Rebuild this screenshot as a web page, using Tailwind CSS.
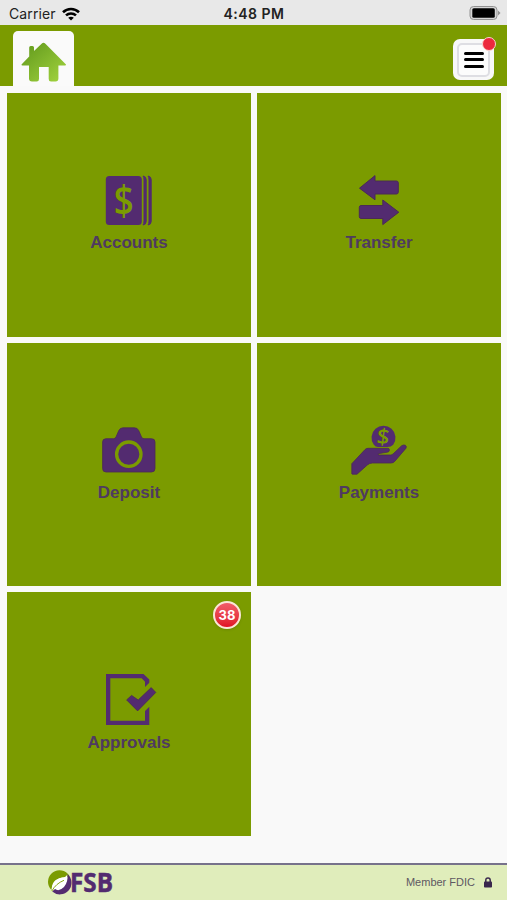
<!DOCTYPE html>
<html lang="en">

<head>
  <meta charset="UTF-8">
  <meta name="viewport" content="width=device-width, initial-scale=1.0">
  <title>FSB Mobile</title>
  <script src="https://cdn.jsdelivr.net/npm/@tailwindcss/browser@4"></script>
</head>

<body class="bg-[#f9f9f9] font-['Liberation_Sans',sans-serif]">
  <div class="w-[507px] h-[900px] flex flex-col overflow-hidden">

    <!-- Status bar -->
    <div class="h-[25px] shrink-0 bg-[#e8e8e8] grid grid-cols-3 items-center pl-[9px] pr-[6px] pt-[2px] font-['Inter',sans-serif] text-[#222]">
      <div class="flex items-center gap-[6px]">
        <span class="text-[14px] leading-none tracking-[0.1px]">Carrier</span>
        <svg class="w-[18px] h-[14px]" viewBox="0 0 18 14" fill="none" stroke="#000" stroke-width="2.6">
          <path d="M1 5.2C5.5 .9 12.5 .9 17 5.2" />
          <path d="M4 8.4C6.8 5.8 11.2 5.8 14 8.4" />
          <path d="M9 13.5L6.2 10.7C7.8 9.3 10.2 9.3 11.8 10.7Z" fill="#000" stroke="none" />
        </svg>
      </div>
      <span class="-ml-[2px] text-center text-[14px] leading-none tracking-[0.5px] font-semibold whitespace-nowrap">4:48 PM</span>
      <svg class="justify-self-end w-[32px] h-[16px] mb-[1px]" viewBox="0 0 32 16">
        <rect x="1" y="1.5" width="27" height="13" rx="3.5" fill="#d5d5d5" stroke="#929292" />
        <rect x="3.3" y="3.2" width="22.5" height="9.6" rx="1.5" fill="#000" />
        <path d="M29 5.5L31.5 8L29 10.5Z" fill="#929292" />
      </svg>
    </div>

    <!-- Header -->
    <header class="h-[61px] shrink-0 bg-[#7b9b00] flex justify-between items-end pl-[13px] pr-[13px]">
      <div class="w-[61px] h-[55px] bg-[#fafafa] rounded-t-[5px]">
        <svg class="w-[61px] h-[55px]" viewBox="0 0 61 55">
          <defs>
            <linearGradient id="house" x1="0" y1="0" x2="1" y2="1">
              <stop offset="0" stop-color="#5f971b" />
              <stop offset="1" stop-color="#a4d53f" />
            </linearGradient>
          </defs>
          <path d="M8.5 33.5L16.2 25.5V16.5Q16.2 15 17.7 15H19.5Q21 15 21 16.5V20L28.6 12.7Q30.5 11 32.4 12.7L53 33.5Q53.2 34.4 52 34.4H45.4V47.5Q45.4 50.5 42.5 50.5H38Q35.7 50.5 35.7 48V36H26V48Q26 50.5 23.7 50.5H19Q16 50.5 16 47.5V34.4H9.5Q8.3 34.4 8.5 33.5Z" fill="url(#house)" />
        </svg>
      </div>
      <button class="relative w-[41px] h-[41px] mb-[6px] bg-[#f8f8f8] rounded-[7px] flex items-center justify-center">
        <span class="w-[33px] h-[34px] rounded-[5px] border-2 border-[#dedee3] bg-[#fcfcfc] flex flex-col items-center justify-center gap-[3.5px]">
          <span class="w-[20px] h-[3px] rounded-full bg-black"></span>
          <span class="w-[20px] h-[3px] rounded-full bg-black"></span>
          <span class="w-[20px] h-[3px] rounded-full bg-black"></span>
        </span>
        <span class="absolute -top-[2px] -right-[2px] w-[14px] h-[14px] rounded-full border border-[#f8d5cf] bg-[#ec293d]"></span>
      </button>
    </header>

    <!-- Menu tiles -->
    <main class="mt-[7px] ml-[7px] grid grid-cols-[244px_244px] grid-rows-[243.5px_243.5px_244px] gap-[6px] text-[#4f3a60]">
      <a class="bg-[#7b9b00] flex flex-col items-center pt-[77px]">
        <svg class="w-[100px] h-[60px]" viewBox="0 0 100 60" fill="#532b70">
          <rect x="26.8" y="6" width="36" height="49" rx="3.5" />
          <path d="M64 6Q67.2 6.5 67.2 9.5V51.5Q67.2 54.5 64 55Q65 54 65 51V10Q65 7 64 6Z" stroke="#532b70" />
          <path d="M69 6Q72.2 6.5 72.2 9.5V51.5Q72.2 54.5 69 55Q70 54 70 51V10Q70 7 69 6Z" stroke="#532b70" />
          <text x="44.8" y="45" text-anchor="middle" font-family="Open Sans" font-weight="600" font-size="41" textLength="20" lengthAdjust="spacingAndGlyphs" fill="#7b9b00">$</text>
        </svg>
        <span class="mt-[3px] text-[17px] leading-[20px] font-bold">Accounts</span>
      </a>
      <a class="bg-[#7b9b00] flex flex-col items-center pt-[77px]">
        <svg class="w-[100px] h-[60px]" viewBox="0 0 100 60" fill="#532b70" stroke="#4b2a56" stroke-width="1" stroke-linejoin="round">
          <path d="M30.5 18.2L46 5.6V11H67.5Q69.3 11 69.3 13V22Q69.3 24 67.5 24H46V29.8Z" />
          <path d="M69.8 42.2L53.8 30V35.5H32Q30.3 35.5 30.3 37.5V46.5Q30.3 48.5 32 48.5H53.8V54.6Z" />
        </svg>
        <span class="mt-[3px] text-[17px] leading-[20px] font-bold">Transfer</span>
      </a>
      <a class="bg-[#7b9b00] flex flex-col items-center pt-[77px]">
        <svg class="w-[100px] h-[60px]" viewBox="0 0 100 60" fill="#532b70">
          <path d="M27 18.7H34.5Q36.3 18.7 37 17L39.8 10.5Q41 7.8 44 7.8H55.5Q58.5 7.8 59.7 10.5L62.5 17Q63.2 18.7 65 18.7H72.5Q76 18.7 76 22V48.5Q76 52 72.5 52H27Q23.6 52 23.6 48.5V22Q23.6 18.7 27 18.7Z" stroke="#4b2a56" stroke-width=".8" />
          <circle cx="49.8" cy="34.2" r="12.2" fill="none" stroke="#7b9b00" stroke-width="3.3" />
        </svg>
        <span class="mt-[3px] text-[17px] leading-[20px] font-bold">Deposit</span>
      </a>
      <a class="bg-[#7b9b00] flex flex-col items-center pt-[77px]">
        <svg class="w-[100px] h-[60px]" viewBox="0 0 100 60" fill="#532b70">
          <path d="M44.8 24.8A12 12 0 1 1 64.2 24.8Q62 27 58.5 27H49Q46.5 27 44.8 24.8Z" />
          <text x="54.3" y="24.6" text-anchor="middle" transform="rotate(7 54 17)" font-family="Open Sans" font-weight="600" font-size="22" fill="#7b9b00">$</text>
          <path d="M22.8 53.8V43.7L36 29.6Q37.2 28.3 39 28.3H58.8Q60.4 28.3 60.4 30Q60.4 31.8 58.8 32.1L49.3 33.7V35H61.5Q63 35 64.1 33.9L72.7 25.7Q74.5 24.6 76.3 25.2Q78 26.4 77 28.2L65.7 41.4Q64.3 43 62 43H43.5Q40.5 43 38.3 45L28 54.2H23.2Z" stroke="#4b2a56" stroke-width=".8" />
        </svg>
        <span class="mt-[3px] text-[17px] leading-[20px] font-bold">Payments</span>
      </a>
      <a class="relative bg-[#7b9b00] flex flex-col items-center pt-[77px]">
        <svg class="w-[100px] h-[60px]" viewBox="0 0 100 60" fill="#532b70">
          <path d="M27 5H64.5L70.3 10.5V13.8L66 18V12.8L62.7 9.3H31.3V51.8H66V42L70.3 37.8V56H27Z" />
          <path d="M47.6 30.9L52.6 26.4L59.2 31L72.2 18.6L76.8 23.4L58.6 41.9Z" stroke="#4b2a56" stroke-width=".8" />
        </svg>
        <span class="mt-[4px] text-[17px] leading-[20px] font-bold">Approvals</span>
        <span class="absolute top-[9px] right-[10px] w-[28px] h-[28px] pt-px rounded-full border-2 border-[#fae6d7] bg-linear-to-b from-[#f15b69] to-[#e00c24] shadow text-white text-[13px] font-bold font-['Inter',sans-serif] flex items-center justify-center">38</span>
      </a>
    </main>

    <!-- Footer -->
    <footer class="mt-auto h-[37px] shrink-0 border-t-2 border-[#77728b] bg-[#e0edbb] flex items-center justify-between pl-[48px] pr-[15px]">
      <svg class="w-[68px] h-[35px]" viewBox="0 -4.5 68 35">
        <path d="M3.5 20.5A11 11 0 0 1 19.5 4Q21.5 5.5 21.8 8Q12 6 6 13Q3.2 17 3.5 20.5Z" fill="#7b9b00" />
        <path d="M4 21Q3 10 14 8.3Q18 7.8 19.3 5Q20.8 17 13 20.3Q8 21.7 6 20Z" fill="#fff" />
        <path d="M19.5 4.5A11 11 0 0 1 4.2 22L7 19.5Q11 22.5 16 17.5Q20.3 12.5 19.5 4.5Z" fill="#532b70" />
        <path d="M3.8 21.5Q8 14 16 10.8" fill="none" stroke="#7b9b00" stroke-width=".9" />
        <text x="22" y="22.6" textLength="43" lengthAdjust="spacingAndGlyphs" font-family="Open Sans" font-weight="700" font-size="26.5" fill="#532b70" stroke="#532b70" stroke-width=".5">FSB</text>
      </svg>
      <div class="flex items-center gap-[9px] text-[#5e5862]">
        <span class="text-[11px]">Member FDIC</span>
        <svg class="w-[8px] h-[11px]" viewBox="0 0 8 11">
          <path d="M1.8 5V3.2Q1.8 1 4 1T6.2 3.2V5" fill="none" stroke="#39274d" stroke-width="1.5" />
          <rect x="0" y="4.5" width="8" height="6" rx=".8" fill="#39274d" />
        </svg>
      </div>
    </footer>
  </div>
</body>

</html>
